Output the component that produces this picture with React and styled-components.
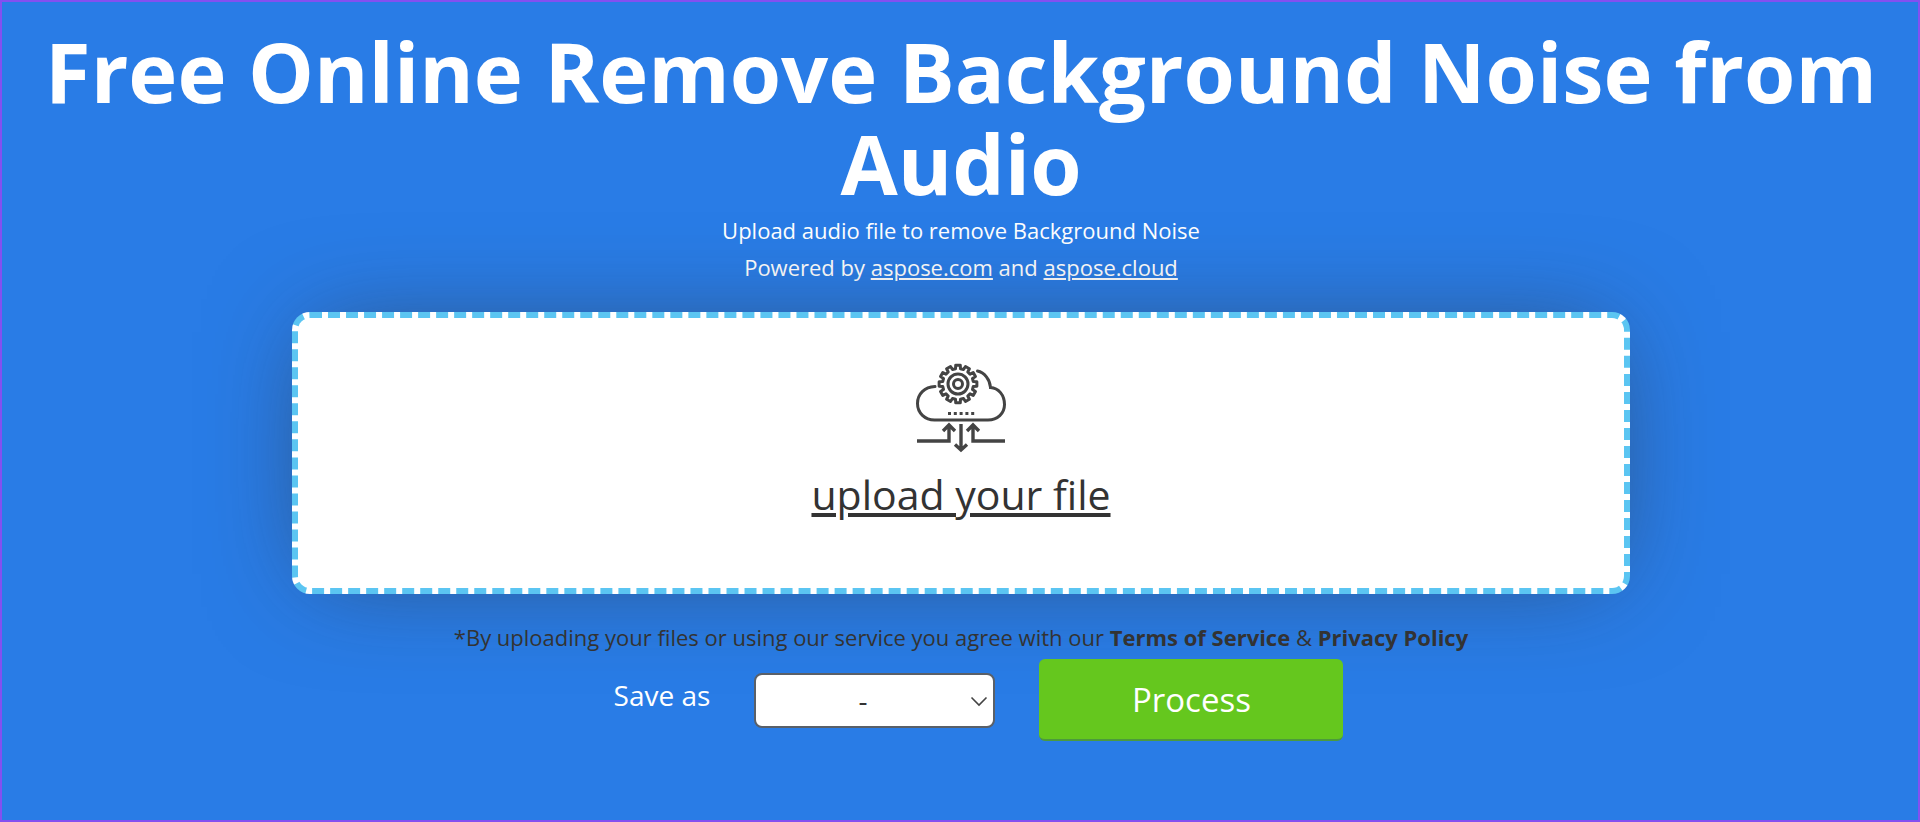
import { useState } from "react";
import styled, { createGlobalStyle } from "styled-components";

const GlobalStyle = createGlobalStyle`
  * {
    box-sizing: border-box;
  }

  body {
    margin: 0;
    background-color: #297ce6;
    font-family: "Open Sans", "Noto Sans", sans-serif;
  }
`;

const Page = styled.main`
  display: flex;
  flex-direction: column;
  align-items: center;
  min-height: 100vh;
  padding: 23px 40px 76px 42px;
  border: 2px solid #8350f0;
  background-color: #297ce6;
  color: #fff;
`;

const Title = styled.h1`
  margin: 0 0 3px;
  font-size: 83px;
  font-weight: 700;
  line-height: 92px;
  text-align: center;
`;

const Intro = styled.p`
  margin: 0;
  font-size: 22px;
  line-height: 37px;
  text-align: center;
`;

const IntroLink = styled.a`
  color: #fff;
  text-decoration: underline;
`;

const DropZone = styled.label`
  display: flex;
  flex-direction: column;
  align-items: center;
  width: 73%;
  height: 282px;
  margin-top: 26px;
  padding-top: 45px;
  border: 6px dashed #5bc5f2;
  border-radius: 18px;
  background-color: #fff;
  box-shadow: 0 0 100px -20px rgba(51, 51, 51, 0.6);
  color: #333;
  cursor: pointer;
`;

const FileInput = styled.input`
  position: absolute;
  width: 1px;
  height: 1px;
  opacity: 0;
`;

const UploadText = styled.span`
  margin-top: 14px;
  font-size: 41px;
  line-height: 54px;
  text-decoration: underline;
`;

const Terms = styled.p`
  margin: 27px 0 0;
  color: #333;
  font-size: 22px;
  line-height: 32px;
  text-align: center;
`;

const TermsLink = styled.a`
  color: #333;
  font-weight: 700;
  text-decoration: none;
`;

const Actions = styled.div`
  display: flex;
  align-items: center;
  gap: 44px;
  margin-top: 6px;
  padding-left: 35px;
`;

const SaveLabel = styled.label`
  padding-bottom: 10px;
  font-size: 28px;
  line-height: 38px;
`;

const SelectWrap = styled.div`
  position: relative;
  width: 241px;
`;

const FormatSelect = styled.select`
  width: 100%;
  height: 55px;
  padding: 0 24px 0 0;
  border: 2px solid #5a6068;
  border-radius: 8px;
  background-color: #fff;
  color: #333;
  font-family: inherit;
  font-size: 28px;
  text-align: center;
  text-align-last: center;
  appearance: none;
`;

const SelectArrow = styled.svg`
  position: absolute;
  top: 20px;
  right: 6px;
  pointer-events: none;
`;

const ProcessButton = styled.button`
  width: 304px;
  height: 82px;
  border: none;
  border-bottom: 2px solid #4c9a3c;
  border-radius: 6px;
  background-color: #65c71e;
  color: #fff;
  font-family: inherit;
  font-size: 33px;
  cursor: pointer;
`;

const gearPoints = () => {
  const points = [];
  const teeth = 12;
  for (let i = 0; i < teeth; i++) {
    const angle = (i * 2 * Math.PI) / teeth - Math.PI / 2;
    [
      [-0.16, 15.5],
      [-0.12, 19],
      [0.12, 19],
      [0.16, 15.5],
    ].forEach(([shift, radius]) => {
      const x = 42 + radius * Math.cos(angle + shift);
      const y = 21 + radius * Math.sin(angle + shift);
      points.push(`${x.toFixed(2)},${y.toFixed(2)}`);
    });
  }
  return points.join(" ");
};

const CloudIcon = () => (
  <svg
    width="90"
    height="90"
    viewBox="0 0 90 90"
    fill="none"
    stroke="#444"
    strokeWidth="3"
    aria-hidden="true"
  >
    <polygon points={gearPoints()} strokeLinejoin="round" />
    <circle cx="42" cy="21" r="10" />
    <circle cx="42" cy="21" r="4.5" />
    <path
      d="M19 23.5C8.5 24 1.5 31 1.5 40.5C1.5 50 9 57 18.5 57H72C81.5 57 88.5 50.5 88.5 41.5C88.5 32 82.5 25 74.5 24.5C74 16.5 68.5 9.5 61.5 8"
      strokeLinecap="round"
    />
    <path d="M32 50.5H59" strokeDasharray="3 2.8" />
    <path d="M1 78H33V63M27 68L33 62L39 68" strokeWidth="3.4" />
    <path d="M89 78H57V63M51 68L57 62L63 68" strokeWidth="3.4" />
    <path d="M45 61V87M39 81.5L45 87L51 81.5" strokeWidth="3.4" />
  </svg>
);

const App = () => {
  const [format, setFormat] = useState("-");

  return (
    <>
      <GlobalStyle />
      <Page>
        <Title>Free Online Remove Background Noise from Audio</Title>
        <Intro>Upload audio file to remove Background Noise</Intro>
        <Intro>
          Powered by <IntroLink href="#aspose-com">aspose.com</IntroLink> and{" "}
          <IntroLink href="#aspose-cloud">aspose.cloud</IntroLink>
        </Intro>

        <DropZone htmlFor="file">
          <FileInput id="file" type="file" accept="audio/*" />
          <CloudIcon />
          <UploadText>upload your file</UploadText>
        </DropZone>

        <Terms>
          *By uploading your files or using our service you agree with our{" "}
          <TermsLink href="#terms">Terms of Service</TermsLink> &amp;{" "}
          <TermsLink href="#privacy">Privacy Policy</TermsLink>
        </Terms>

        <Actions>
          <SaveLabel htmlFor="format">Save as</SaveLabel>
          <SelectWrap>
            <FormatSelect
              id="format"
              value={format}
              onChange={(e) => setFormat(e.target.value)}
            >
              <option value="-">-</option>
            </FormatSelect>
            <SelectArrow
              width="20"
              height="16"
              viewBox="0 0 20 16"
              fill="none"
              stroke="#444"
              strokeWidth="1.6"
              aria-hidden="true"
            >
              <path d="M2.5 4.5L10 12L17.5 4.5" />
            </SelectArrow>
          </SelectWrap>
          <ProcessButton type="button">Process</ProcessButton>
        </Actions>
      </Page>
    </>
  );
};

export default App;
